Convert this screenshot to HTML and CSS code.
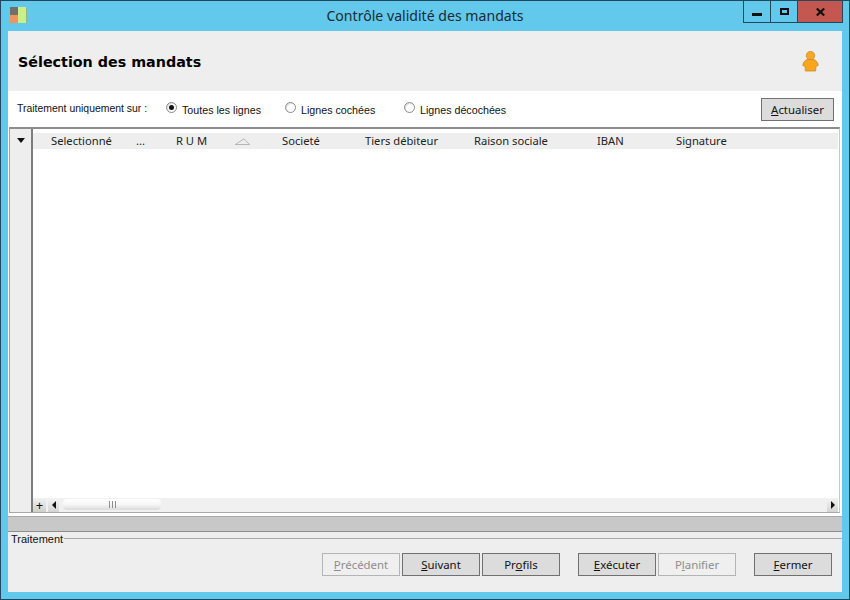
FILE: index.html
```html
<!DOCTYPE html>
<html lang="fr">
<head>
<meta charset="utf-8">
<title>Contrôle validité des mandats</title>
<link rel="stylesheet" href="styles.css">
</head>
<body>
<div class="window">
  <div class="titlebar">
    <svg class="app-icon" width="17" height="17" viewBox="0 0 17 17"><rect x="0" y="0" width="8" height="8" fill="#6f6f6f"/><rect x="0" y="8" width="8" height="8" fill="#f2935c"/><rect x="8" y="0" width="8" height="16" fill="#c9ee8c"/><rect x="16" y="1" width="1" height="15" fill="#8fb58a"/></svg>
    <div class="title">Contrôle validité des mandats</div>
    <div class="controls">
      <div class="ctl ctl-min"><span class="min-glyph"></span></div>
      <div class="ctl ctl-max"><span class="max-glyph"></span></div>
      <div class="ctl ctl-close"><svg width="9" height="8" viewBox="0 0 9 8"><path d="M.8 .5L8.2 7.5M8.2 .5L.8 7.5" stroke="#111" stroke-width="2.2" fill="none"/></svg></div>
    </div>
  </div>
  <div class="client">
    <div class="header">
      <h1 class="heading">Sélection des mandats</h1>
      <svg class="user-icon" width="17" height="21" viewBox="0 0 17 21"><circle cx="8.5" cy="4.6" r="4.2" fill="#f7a823" stroke="#c98a2a" stroke-width=".8"/><path d="M5 8.6C3 9.4 1.2 11 .8 14.5L3 15.2L3.4 20H13.6L14 15.2L16.2 14.5C15.8 11 14 9.4 12 8.6Z" fill="#f9a61e" stroke="#c98a2a" stroke-width=".8"/></svg>
    </div>
    <div class="filter">
      <span class="filter-label">Traitement uniquement sur :</span>
      <label class="radio r1"><span class="dot on"></span>Toutes les lignes</label>
      <label class="radio r2"><span class="dot"></span>Lignes cochées</label>
      <label class="radio r3"><span class="dot"></span>Lignes décochées</label>
      <button class="btn refresh"><u>A</u>ctualiser</button>
    </div>
    <div class="grid">
      <div class="grid-side">
        <svg class="side-arrow" width="8" height="5" viewBox="0 0 8 5"><path d="M0 0H8L4 5Z" fill="#111"/></svg>
      </div>
      <div class="grid-main">
        <div class="cols">
          <span>Selectionné</span><span>...</span><span>R U M</span>
          <svg class="sort" width="15" height="7" viewBox="0 0 15 7"><path d="M0 6.5H14.5L9 .8L1 6" fill="none" stroke="#b5b5b5"/></svg>
          <span>Societé</span><span>Tiers débiteur</span><span>Raison sociale</span><span>IBAN</span><span>Signature</span>
        </div>
        <div class="rows"></div>
        <div class="hscroll">
          <span class="plus">+</span>
          <span class="sb-btn"><i class="tri-l"></i></span>
          <span class="thumb"><i class="grip"></i></span>
          <span class="track"></span>
          <span class="sb-btn"><i class="tri-r"></i></span>
        </div>
      </div>
    </div>
    <div class="progress"></div>
    <div class="footer">
      <div class="legend"><span>Traitement</span><span class="rule"></span></div>
      <div class="actions">
        <button class="btn off"><u>P</u>récédent</button>
        <button class="btn"><u>S</u>uivant</button>
        <button class="btn">Pr<u>o</u>fils</button>
        <button class="btn gap-l"><u>E</u>xécuter</button>
        <button class="btn off">P<u>l</u>anifier</button>
        <button class="btn gap-l"><u>F</u>ermer</button>
      </div>
    </div>
  </div>
</div>
</body>
</html>
```

FILE: styles.css
```css
html, body { margin: 0; padding: 0; }
body { width: 850px; height: 600px; overflow: hidden; font-family: "Noto Sans", "Liberation Sans", sans-serif; font-size: 12px; color: #111; }
.window { box-sizing: border-box; width: 850px; height: 600px; background: #62c9ec; border: 1px solid #23475c; display: flex; flex-direction: column; }
.titlebar { height: 30px; flex: none; position: relative; display: flex; align-items: flex-start; }
.app-icon { margin: 6px 0 0 9px; }
.title { position: absolute; left: 0; right: 0; top: 6px; text-align: center; font-size: 14.1px; line-height: 18px; color: #1c2b33; }
.controls { position: relative; margin-left: auto; margin-right: 6px; display: flex; height: 21px; border: 1px solid #23475c; border-top: 0; }
.ctl { height: 21px; display: flex; align-items: center; justify-content: center; box-sizing: border-box; }
.ctl-min { width: 27px; border-right: 1px solid #23475c; }
.ctl-max { width: 26px; }
.ctl-close { width: 45px; background: #c4574f; border-left: 1px solid #23475c; }
.min-glyph { width: 10px; height: 3px; background: #111; margin-top: 6px; }
.max-glyph { width: 5px; height: 3px; border: 2px solid #111; }
.client { flex: 1; margin: 0 7px 7px; background: #fff; display: flex; flex-direction: column; min-height: 0; }
.header { height: 60px; flex: none; background: #eeeeee; display: flex; align-items: center; justify-content: space-between; padding: 0 23px 0 10px; }
.heading { margin: 2px 0 0; font-family: "DejaVu Sans", sans-serif; font-size: 14.3px; font-weight: 700; color: #000; }
.user-icon { display: block; }
.filter { height: 36px; flex: none; display: flex; align-items: center; background: #fff; padding: 0 8px 0 9px; font-family: "Liberation Sans", sans-serif; font-size: 10.7px; }
.filter-label { width: 149px; margin-top: -1px; font-size: 10.45px; }
.radio { display: flex; align-items: center; padding-top: 1px; }
.r1 { width: 119px; }
.r2 { width: 119px; }
.r3 { flex: 1; }
.dot { width: 11px; height: 11px; box-sizing: border-box; border-radius: 50%; border: 1px solid #8a8a8a; background: #fff; margin: -4px 5px 0 0; box-shadow: inset 1px 1px 1px #ddd; display: flex; align-items: center; justify-content: center; }
.dot.on::after { content: ""; width: 5px; height: 5px; border-radius: 50%; background: #111; }
.btn { flex: none; font-family: "Noto Sans", sans-serif; font-size: 11.4px; color: #111; width: 78px; height: 23px; box-sizing: border-box; background: #dcdcdc; border: 1px solid #707070; padding: 0; margin: 0; }
.btn u { text-underline-offset: 1px; }
.btn.off { background: #efefef; border-color: #b4b4b4; color: #8d8d8d; }
.refresh { width: 73px; }
.grid { height: 386px; flex: none; display: flex; margin-left: 1px; width: 831px; box-sizing: border-box; border-top: 2px solid #8c8c8c; border-bottom: 1px solid #a8a8a8; border-right: 1px solid #c8c8c8; border-left: 1px solid #a0a0a0; background: #fff; }
.grid-side { width: 21px; flex: none; background: #eeeeee; border-right: 2px solid #7d7d7d; }
.side-arrow { display: block; margin: 9px 0 0 7px; }
.grid-main { flex: 1; display: flex; flex-direction: column; min-width: 0; }
.cols { margin: 4px 1px 0 0; height: 16px; flex: none; background: #eeeeee; display: grid; grid-template-columns: 85px 40px 59px 47px 83px 109px 123px 79px 1fr; padding-left: 18px; align-items: center; line-height: 16px; white-space: nowrap; }
.cols span { font-size: 11.2px; color: #222; }
.sort { display: block; }
.rows { flex: 1; background: #fff; }
.hscroll { height: 14px; flex: none; display: flex; align-items: stretch; background: #f0f0f0; margin-right: 1px; }
.plus { width: 13px; text-align: center; line-height: 14px; font-size: 13px; background: linear-gradient(#f2f2f2, #cfcfcf); color: #111; }
.sb-btn { width: 11px; display: flex; align-items: center; justify-content: center; background: linear-gradient(#f4f4f4, #d4d4d4); margin-left: 2px; }
.tri-l { border-right: 4px solid #111; border-top: 4px solid transparent; border-bottom: 4px solid transparent; }
.tri-r { border-left: 4px solid #111; border-top: 4px solid transparent; border-bottom: 4px solid transparent; }
.thumb { width: 98px; height: 11px; margin: 1px 0 0 4px; border-radius: 4px; background: linear-gradient(#fff, #f6f6f6 50%, #dadada); display: flex; align-items: center; justify-content: center; }
.grip { width: 7px; height: 7px; background: repeating-linear-gradient(90deg, #8e8e8e 0 1px, transparent 1px 3px); }
.track { flex: 1; }
.progress { height: 14px; flex: none; margin-top: 3px; background: #c8c8c8; border-top: 1px solid #a9a9a9; border-bottom: 1px solid #8f8f8f; }
.footer { flex: 1; background: #eeeeee; display: flex; flex-direction: column; min-height: 0; }
.legend { display: flex; align-items: center; height: 13px; font-family: "Liberation Sans", sans-serif; font-size: 11px; padding-left: 3px; flex: none; }
.rule { flex: 1; height: 1px; background: #a8a8a8; margin: -1px 0 0 1px; }
.actions { display: flex; gap: 2px; padding: 8px 0 0 314px; }
.gap-l { margin-left: 16px; }
```
